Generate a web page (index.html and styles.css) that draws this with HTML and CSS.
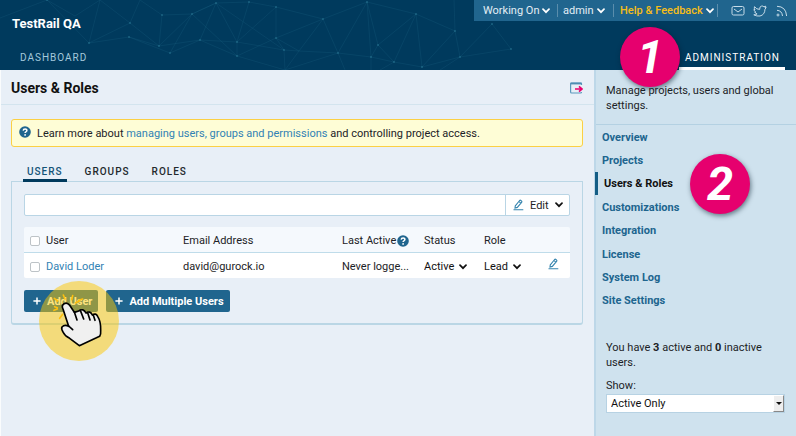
FILE: index.html
```html
<!DOCTYPE html>
<html lang="en">
<head>
<meta charset="utf-8">
<title>Users &amp; Roles - TestRail QA</title>
<link rel="stylesheet" href="styles.css">
</head>
<body>
<svg class="defs" aria-hidden="true">
  <symbol id="chevron" viewBox="0 0 8 6"><path d="M1 1.2l3 3 3-3" fill="none" stroke="currentColor" stroke-width="1.7" stroke-linecap="round"/></symbol>
  <symbol id="pencil" viewBox="0 0 11 12"><path d="M2.3 6.8L6.6 1.5q.6-.6 1.300 0l.7.6q.6.6 0 1.200L4.300 8.400l-2.300.7zM6 2.600l1.900 1.500M.5 10.700h9.800" fill="none" stroke="currentColor" stroke-width="1.100"/></symbol>
  <symbol id="plus" viewBox="0 0 8 8"><path d="M4 .4v7.200M.4 4h7.200" fill="none" stroke="currentColor" stroke-width="1.500"/></symbol>
  <symbol id="help" viewBox="0 0 12 12"><circle cx="6" cy="6" r="5.800" fill="#20658e"/><path d="M4.200 4.600q.1-1.600 1.900-1.600t1.800 1.500q0 .8-1 1.300-.8.4-.8 1.200" fill="none" stroke="#fff" stroke-width="1.500"/><circle cx="6.100" cy="8.900" r=".9" fill="#fff"/></symbol>
</svg>
<header class="header">
  <svg class="network" viewBox="0 0 600 70" preserveAspectRatio="xMinYMin slice" aria-hidden="true">
    <path d="M0 18L47 0 89 43 130 23 100 0 75 16 47 0M100 0L89 43 129 37 159 46 130 23 140 0 162 15 192 14 170 53 129 37M162 15L159 46 192 14 216 3 200 40 170 53M159 46L200 40 237 42 216 3 192 14 237 56 200 40M216 3L249 2 276 7 237 42 237 56 276 38 276 7 323 19 299 51 276 38 284 50 237 42 249 2M216 3L284 50 285 70 237 56M276 38L323 19 338 53 299 51 285 70 338 53 367 2 371 57 338 53 345 70M367 2L323 19M367 2L416 14 378 45 367 2M416 14L394 62 371 57 378 45 394 62 422 67 416 14M416 14L455 31 422 67M455 31L454 0M455 31L460 57 422 67M460 57L492 24 511 49 460 57M460 57L440 70M284 50L299 51M371 57L371 70M394 62L380 70" />
    <g><circle cx="47" cy="0" r="1"/><circle cx="89" cy="43" r="1"/><circle cx="130" cy="23" r="1"/><circle cx="129" cy="37" r="1"/><circle cx="159" cy="46" r="1"/><circle cx="162" cy="15" r="1"/><circle cx="170" cy="53" r="1"/><circle cx="192" cy="14" r="1"/><circle cx="200" cy="40" r="1"/><circle cx="216" cy="3" r="1"/><circle cx="237" cy="42" r="1"/><circle cx="237" cy="56" r="1"/><circle cx="249" cy="2" r="1"/><circle cx="276" cy="7" r="1"/><circle cx="276" cy="38" r="1"/><circle cx="284" cy="50" r="1"/><circle cx="323" cy="19" r="1"/><circle cx="338" cy="53" r="1"/><circle cx="367" cy="2" r="1"/><circle cx="371" cy="57" r="1"/><circle cx="378" cy="45" r="1"/><circle cx="394" cy="62" r="1"/><circle cx="416" cy="14" r="1"/><circle cx="422" cy="67" r="1"/><circle cx="455" cy="31" r="1"/><circle cx="460" cy="57" r="1"/><circle cx="492" cy="24" r="1"/><circle cx="511" cy="49" r="1"/></g>
  </svg>
  <div class="header-top">
    <div class="brand">TestRail QA</div>
    <div class="toolbar">
      <button class="menu menu-first" type="button">Working On <svg class="chevron"><use href="#chevron"/></svg></button>
      <button class="menu menu-admin" type="button">admin <svg class="chevron"><use href="#chevron"/></svg></button>
      <button class="menu menu-help" type="button">Help &amp; Feedback <svg class="chevron"><use href="#chevron"/></svg></button>
      <div class="social">
        <a href="#mail" aria-label="Email"><svg width="14" height="12" viewBox="0 0 14 12"><rect x="1" y="1.500" width="12" height="8.500" rx="1.500"/><path d="M3 4l4 3 4-3"/></svg></a>
        <a href="#twitter" aria-label="Twitter"><svg width="14" height="12" viewBox="0 0 14 12"><path d="M1.500 1.700Q3.500 4.500 6.700 4.400 6.300 1.500 8.700 1q1.300-.2 2.200.8l1.900-.6-.8 1.600 1.200-.2-1.200 1.600Q11.800 9.800 7 11 3.800 11.500.8 9.800q2 .1 3.300-.9-1.800-.3-2.300-1.800h1Q.8 6.200 1 4.300l1 .4Q.8 3.300 1.500 1.700z"/></svg></a>
        <a href="#rss" aria-label="News feed"><svg width="14" height="12" viewBox="0 0 14 12"><path d="M2 1.300q9 .2 9.600 9.700M2 5.300q5 .3 5.500 5.700"/><circle cx="3" cy="10" r="1"/></svg></a>
      </div>
    </div>
  </div>
  <nav class="nav">
    <a class="nav-tab" href="#dashboard">DASHBOARD</a>
    <a class="nav-tab nav-active" href="#administration">ADMINISTRATION<span class="badge badge-one">1</span></a>
  </nav>
</header>
<div class="page">
  <main class="content">
    <div class="title-bar">
      <h1>Users &amp; Roles</h1>
      <svg width="13" height="12" viewBox="0 0 13 12" aria-hidden="true"><path d="M11.500 3V2q0-1-1-1H1.600q-1 0-1 1v8q0 1 1 1h8.900q1 0 1-1" fill="none" stroke="#5a9abd" stroke-width="1.200"/><path d="M.6 1.500h11" stroke="#4d8db2" stroke-width="1.800"/><path d="M5 7h6M9 4.400L12 7 9 9.600" fill="none" stroke="#e8006e" stroke-width="1.700"/></svg>
    </div>
    <div class="content-body">
      <p class="notice"><svg class="help"><use href="#help"/></svg><span>Learn more about <a href="#docs">managing users, groups and permissions</a> and controlling project access.</span></p>
      <nav class="tabs">
        <a class="tab tab-active" href="#users">USERS</a>
        <a class="tab" href="#groups">GROUPS</a>
        <a class="tab" href="#roles">ROLES</a>
      </nav>
      <section class="panel">
        <div class="search">
          <input type="text" aria-label="Filter users">
          <button type="button"><svg class="pencil"><use href="#pencil"/></svg>Edit<svg class="chevron"><use href="#chevron"/></svg></button>
        </div>
        <table class="users">
          <colgroup><col class="col-check"><col class="col-user"><col class="col-email"><col class="col-active"><col class="col-status"><col class="col-role"><col class="col-edit"></colgroup>
          <thead>
            <tr><th><input type="checkbox" aria-label="Select all users"></th><th>User</th><th>Email Address</th><th><span class="with-icon">Last Active <svg class="help"><use href="#help"/></svg></span></th><th>Status</th><th>Role</th><th></th></tr>
          </thead>
          <tbody>
            <tr>
              <td><input type="checkbox" aria-label="Select David Loder"></td>
              <td><a href="#david">David Loder</a></td>
              <td>david@gurock.io</td>
              <td>Never logge...</td>
              <td><span class="pick pick-status"><select aria-label="Status"><option>Active</option></select><svg class="chevron"><use href="#chevron"/></svg></span></td>
              <td><span class="pick pick-role"><select aria-label="Role"><option>Lead</option></select><svg class="chevron"><use href="#chevron"/></svg></span></td>
              <td><a class="edit-link" href="#edit" aria-label="Edit user"><svg class="pencil"><use href="#pencil"/></svg></a></td>
            </tr>
          </tbody>
        </table>
        <div class="actions">
          <button type="button"><svg class="plus"><use href="#plus"/></svg>Add User</button>
          <button type="button"><svg class="plus"><use href="#plus"/></svg>Add Multiple Users</button>
          <svg class="pointer" viewBox="0 0 300 270" aria-hidden="true">
            <circle cx="147" cy="138" r="120" fill="#fec700" fill-opacity=".5"/>
            <path d="M100 60l5 12M128 62l-3 12M83 78l-10-8M136 84l12-6M146 76l12-4M82 102l-10 4M98 118l-9 12M74 95l8 3" fill="none" stroke="#fdc010" stroke-width="5" stroke-linecap="round"/>
            <path d="M148 212L209 184Q213 178 212 166 213 140 203 124 197 113 187 120 180 106 168 114 160 98 146 108L133 112 119 91Q111 80 101 87 94 92 99 102L116 154Q104 147 96 156 93 161 99 171 105 184 119 190z" fill="#f0f0f0" stroke="#000" stroke-width="5" stroke-linejoin="round"/>
            <path d="M133 111l8 24M151 106l10 26M173 113l7 22M190 121l5 15M116 153l12 11" fill="none" stroke="#000" stroke-width="5" stroke-linecap="round"/>
          </svg>
        </div>
      </section>
    </div>
  </main>
  <aside class="sidebar">
    <p class="intro">Manage projects, users and global settings.</p>
    <nav class="side-nav">
      <a href="#overview">Overview</a>
      <a href="#projects">Projects</a>
      <a class="side-active" href="#users-roles">Users &amp; Roles<span class="badge badge-two">2</span></a>
      <a href="#customizations">Customizations</a>
      <a href="#integration">Integration</a>
      <a href="#license">License</a>
      <a href="#log">System Log</a>
      <a href="#settings">Site Settings</a>
    </nav>
    <div class="summary">
      <p>You have <b>3</b> active and <b>0</b> inactive users.</p>
      <label for="show">Show:</label>
      <div class="show-box">
        <select id="show"><option>Active Only</option></select>
        <span class="show-arrow"></span>
      </div>
    </div>
  </aside>
</div>
</body>
</html>
```

FILE: styles.css
```css
* { box-sizing: border-box; }
body {
  margin: 0;
  min-height: 100vh;
  display: flex;
  flex-direction: column;
  background: #e8eff7;
  color: #1c2226;
  font: 11px/15px Roboto, "Liberation Sans", sans-serif;
}
a { color: #3182b4; text-decoration: none; }
p, h1 { margin: 0; }
button, input, select { font: inherit; color: inherit; margin: 0; }
button { display: flex; align-items: center; border: 0; padding: 0; white-space: nowrap; }
select { appearance: none; border: 0; padding: 0; background: none; }
.defs { position: absolute; width: 0; height: 0; }
.chevron { width: 8px; height: 6px; flex: none; }
.pencil { width: 11px; height: 12px; flex: none; color: #3584ae; }
.plus { width: 8px; height: 8px; flex: none; }
.help { width: 12px; height: 12px; flex: none; }

.header {
  position: relative;
  height: 70px;
  display: flex;
  flex-direction: column;
  justify-content: space-between;
  background: #003a5d;
}
.network { position: absolute; top: 0; left: 0; width: 600px; height: 70px; }
.network path { fill: none; stroke: #1c6283; stroke-width: 1; opacity: .25; }
.network circle { fill: #2c7896; opacity: .6; }
.header-top { position: relative; display: flex; justify-content: space-between; }
.brand { padding: 16px 0 0 12px; color: #fff; font-size: 13px; line-height: 16px; font-weight: 700; }
.toolbar { display: flex; align-items: center; width: 322px; height: 21px; background: #20658e; color: #e3eef5; }
.menu { height: 13px; gap: 3px; border-right: 1px solid #5a8dac; background: none; }
.menu .chevron { color: #fff; }
.menu-first { width: 84px; padding-left: 9px; }
.menu-admin { width: 56px; padding-left: 5px; }
.menu-help { width: 104px; padding-left: 6px; color: #f5bd18; font-weight: 500; }
.social { display: flex; flex: 1; justify-content: space-between; padding: 0 7px 0 13px; }
.social a { display: flex; }
.social svg { fill: none; stroke: #c6dce9; stroke-width: 1; }
.nav { position: relative; display: flex; justify-content: space-between; padding: 0 11px; font-size: 10px; }
.nav-tab { position: relative; height: 23px; padding: 3px 9px 0; color: #a3c9dc; letter-spacing: 1px; }
.nav-active { padding: 3px 5px 0 6px; border-bottom: 3px solid #fff; color: #fff; }

.badge {
  position: absolute;
  z-index: 2;
  width: 60px;
  height: 60px;
  border-radius: 50%;
  background: #e6006e;
  box-shadow: 1px 2px 5px #001a2a88;
  color: #fff;
  font: italic 700 47px/60px Roboto, sans-serif;
  letter-spacing: 0;
  text-align: center;
}
.badge-one { right: 105px; top: -20px; }
.badge-two { left: 92px; top: -18px; }

.page { flex: 1; display: grid; grid-template-columns: minmax(0, 1fr) 202px; }
.content { border-left: 1px solid #fafcfd; }
.title-bar {
  display: flex;
  align-items: center;
  justify-content: space-between;
  height: 35px;
  padding: 2px 11px 0 10px;
  border-bottom: 1px solid #d3e4ee;
}
h1 { font-size: 14px; line-height: 18px; color: #111; font-weight: 700; }
.content-body { padding: 14px 11px 0 10px; }
.notice {
  display: flex;
  gap: 6px;
  height: 28px;
  padding: 6px 7px;
  border: 1px solid #fbd044;
  border-radius: 3px;
  background: #fefdd6;
}
.tabs { display: flex; gap: 14px; height: 35px; padding: 13px 12px 0; font-size: 10px; }
.tab { position: relative; z-index: 1; height: 22px; padding: 4px 4px 0; color: #23292d; font-weight: 500; letter-spacing: 1px; }
.tab-active { border-bottom: 3px solid #003a5d; color: #145478; }
.panel { margin-top: -1px; padding: 12px 12px 11px; border: 1px solid #bad6e5; border-bottom-width: 2px; border-radius: 0 0 3px 3px; }
.search { display: flex; height: 22px; border: 1px solid #b9d5e5; border-radius: 2px; background: #fff; }
.search input { flex: 1; min-width: 0; border: 0; padding: 0 6px; background: none; }
.search button { width: 64px; padding-left: 7px; gap: 6px; border-left: 1px solid #b9d5e5; background: none; }
.search .chevron { color: #111; }

.users { width: 100%; margin: 11px 0 12px; border-collapse: separate; border-spacing: 0; table-layout: fixed; border-radius: 2px; overflow: hidden; }
.users th, .users td { padding: 2px 0 0; text-align: left; font-weight: 400; height: 26px; white-space: nowrap; }
.users th { background: #f5f9fd; border-bottom: 1px solid #bfdcea; }
.users td { background: #fff; height: 25px; }
.users input { appearance: none; display: block; width: 10px; height: 10px; margin-left: 6px; border: 1px solid #bdc3c7; border-radius: 2px; background: #fff; }
.col-check { width: 22px; }
.col-email { width: 159px; }
.col-active { width: 82px; }
.col-status { width: 60px; }
.col-role { width: 64px; }
.col-edit { width: 22px; }
.with-icon, .pick { display: flex; align-items: center; gap: 1px; }
.pick { position: relative; color: #111; }
.pick select { width: 100%; }
.pick .chevron { position: absolute; right: 0; pointer-events: none; }
.pick-status { width: 43px; }
.pick-role { width: 37px; }
.edit-link { display: flex; padding-bottom: 6px; }

.actions { position: relative; display: flex; gap: 8px; }
.actions button { height: 22px; padding: 0 6px 0 9px; gap: 6px; border-radius: 2px; background: #20658e; color: #fff; font-weight: 700; }
.pointer { position: absolute; left: 6px; top: -15px; width: 100px; height: 90px; pointer-events: none; }

.sidebar { border-left: 2px solid #bdd7e8; background: #cfe2ee; }
.intro { height: 55px; padding: 13px 10px 0; border-bottom: 1px solid #b4d1e2; }
.side-nav { display: grid; grid-auto-rows: 1fr; height: 187px; }
.side-nav a { position: relative; display: flex; align-items: center; padding: 1px 0 0 6px; color: #20658e; font-weight: 700; }
.side-nav .side-active { margin-left: -1px; padding-left: 6px; border-left: 3px solid #145d85; color: #111; }
.summary { padding: 28px 11px 0 10px; }
.summary label { display: block; margin: 8px 0 1px; }
.show-box { position: relative; display: flex; height: 19px; border: 1px solid #b7d2e3; background: #fff; }
.show-box select { flex: 1; padding-left: 4px; color: #111; }
.show-arrow { position: absolute; right: 0; top: 0; display: grid; place-items: center; width: 11px; height: 17px; border: 1px solid #fff; border-right-color: #888; border-bottom-color: #888; background: #eee; pointer-events: none; }
.show-arrow::before { content: ""; border: 3px solid transparent; border-top-color: #111; border-bottom: 0; }
```
